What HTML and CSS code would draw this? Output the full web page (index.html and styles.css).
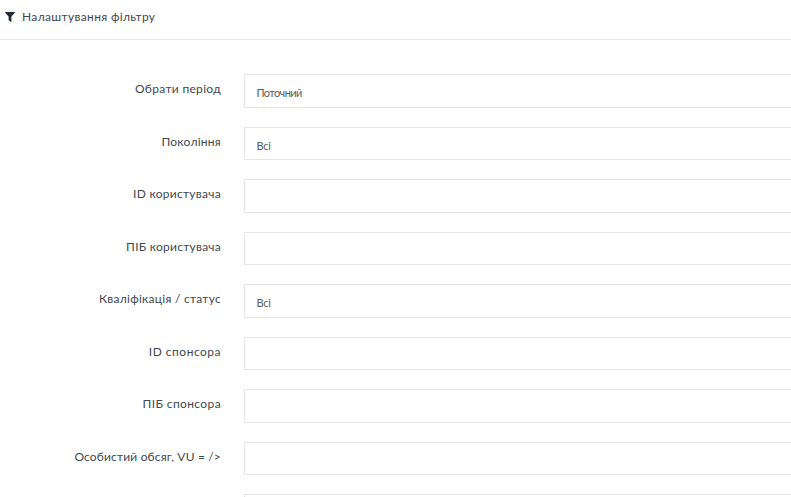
FILE: index.html
```
<!DOCTYPE html>
<html lang="uk">
<head>
<meta charset="utf-8">
<title>Налаштування фільтру</title>
<link rel="stylesheet" href="styles.css">
</head>
<body>
<header class="head">
<svg class="icon" viewBox="0 0 10 10"><path d="M.4 0h9.2q.6.3.2.8L6.4 4.6v4.9q-.2.7-.8.3L3.6 8.3V4.6L.2.8Q-.2.3.4 0z"/></svg>
<h1 class="title">Налаштування фільтру</h1>
</header>
<form class="form">
<div class="row"><label class="label period">Обрати період</label><div class="field current">Поточний</div></div>
<div class="row"><label class="label generation">Покоління</label><div class="field all">Всі</div></div>
<div class="row"><label class="label user-id">ID користувача</label><div class="field"></div></div>
<div class="row"><label class="label user-name">ПІБ користувача</label><div class="field"></div></div>
<div class="row"><label class="label status">Кваліфікація / статус</label><div class="field">Всі</div></div>
<div class="row"><label class="label sponsor-id">ID спонсора</label><div class="field"></div></div>
<div class="row"><label class="label sponsor-name">ПІБ спонсора</label><div class="field"></div></div>
<div class="row"><label class="label volume">Особистий обсяг, VU = /&gt;</label><div class="field"></div></div>
<div class="row cut"><label class="label"></label><div class="field"></div></div>
</form>
</body>
</html>
```
FILE: styles.css
```
* { box-sizing: border-box; }
body { margin: 0; height: 497px; overflow: hidden; background: #fff; color: #414850; font-family: Lato, "Noto Sans", sans-serif; }
.head { display: flex; align-items: center; height: 40px; padding: 0 0 6px 5px; border-bottom: 1px solid #e7eaec; }
.icon { width: 10px; height: 10px; margin-right: 7px; fill: #222b35; }
.title { margin: 0; font-size: 12px; font-weight: 400; letter-spacing: .34px; }
.form { padding-top: 34px; }
.row { display: flex; height: 33.5px; margin-bottom: 19px; }
.row.cut { height: 3px; margin-bottom: 0; }
.cut .field { border-bottom: 0; padding: 0; }
.label { width: 221px; margin-right: 23px; text-align: right; font-size: 12px; line-height: 30px; letter-spacing: .5px; white-space: nowrap; }
.period { letter-spacing: .32px; }
.generation { letter-spacing: .25px; }
.user-id { letter-spacing: .28px; }
.user-name { letter-spacing: .25px; }
.status { letter-spacing: .27px; }
.sponsor-id { letter-spacing: .5px; }
.sponsor-name { letter-spacing: .38px; }
.volume { letter-spacing: .17px; }
.field { flex: 1; border: 1px solid #e5e6e7; border-right: 0; padding: 2px 12px 0 11.5px; font-size: 11px; line-height: 32px; letter-spacing: -.3px; color: #5a5c60; }
.current { letter-spacing: -.6px; }
.all { line-height: 31px; }
```
